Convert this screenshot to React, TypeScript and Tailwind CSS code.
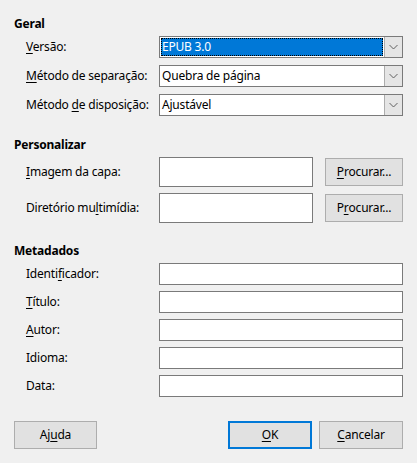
import React from "react";

const U = ({ children }: { children: React.ReactNode }) => (
  <span className="underline underline-offset-2 decoration-1">{children}</span>
);

function Chevron() {
  return (
    <svg width="9" height="6" viewBox="0 0 9 6" className="block">
      <path d="M0.5 1 L4.5 5 L8.5 1" fill="none" stroke="#606060" strokeWidth="1" />
    </svg>
  );
}

function Combo({ value, focused }: { value: string; focused?: boolean }) {
  return (
    <div className="flex h-[22px] w-[244px] shrink-0 border border-[#7a7a7a] bg-white">
      <div className="flex flex-1 items-center p-[1px]">
        {focused ? (
          <div className="flex h-full w-full items-center bg-[#0078d7] pl-[1px] text-white outline-1 outline-dotted outline-black -outline-offset-1">
            {value}
          </div>
        ) : (
          <div className="pl-[1px]">{value}</div>
        )}
      </div>
      <div className="flex w-[18px] items-center justify-center border-l border-[#adadad] bg-[#e5e5e5]">
        <Chevron />
      </div>
    </div>
  );
}

function Field({ w, h }: { w: string; h: string }) {
  return <div className={`${w} ${h} shrink-0 border border-[#7a7a7a] bg-white`} />;
}

function Btn({
  children,
  w,
  primary,
}: {
  children: React.ReactNode;
  w: string;
  primary?: boolean;
}) {
  return (
    <div
      className={`${w} flex h-[28px] shrink-0 items-center justify-center whitespace-nowrap bg-[#e1e1e1] ${
        primary ? "border-2 border-[#0078d7]" : "border border-[#adadad]"
      }`}
    >
      {children}
    </div>
  );
}

function Row({
  label,
  children,
  h,
}: {
  label: React.ReactNode;
  children: React.ReactNode;
  h: string;
}) {
  return (
    <div className={`flex ${h} items-center`}>
      <div className="w-[145px] shrink-0 whitespace-nowrap pl-[12px]">{label}</div>
      {children}
    </div>
  );
}

export default function App() {
  return (
    <div
      className="flex h-[463px] w-[417px] flex-col bg-[#f0f0f0] pl-[14px] pr-[14px] text-[12px] leading-[16px] text-black"
      style={{ fontFamily: '"Noto Sans", "Open Sans", sans-serif', letterSpacing: "-0.2px" }}
    >
      {/* Geral */}
      <div className="mt-[16px] h-[16px] font-bold">Geral</div>
      <div className="mt-[4px] flex flex-col gap-[7px]">
        <Row h="h-[22px]" label={<><U>V</U>ersão:</>}>
          <Combo value="EPUB 3.0" focused />
        </Row>
        <Row h="h-[22px]" label={<><U>M</U>étodo de separação:</>}>
          <Combo value="Quebra de página" />
        </Row>
        <Row h="h-[22px]" label={<>Método <U>d</U>e disposição:</>}>
          <Combo value="Ajustável" />
        </Row>
      </div>

      {/* Personalizar */}
      <div className="mt-[21px] h-[16px] font-bold">Personalizar</div>
      <div className="mt-[4px] flex flex-col gap-[6px]">
        <Row h="h-[30px]" label={<><U>I</U>magem da capa:</>}>
          <Field w="w-[154px]" h="h-[30px]" />
          <div className="ml-[12px]">
            <Btn w="w-[78px]">
              <U>P</U>rocurar...
            </Btn>
          </div>
        </Row>
        <Row h="h-[30px]" label={<>Diretório mu<U>l</U>timídia:</>}>
          <Field w="w-[154px]" h="h-[30px]" />
          <div className="ml-[12px]">
            <Btn w="w-[78px]">
              P<U>r</U>ocurar...
            </Btn>
          </div>
        </Row>
      </div>

      {/* Metadados */}
      <div className="mt-[20px] h-[16px] font-bold">Metadados</div>
      <div className="mt-[4px] flex flex-col gap-[6px]">
        <Row h="h-[22px]" label={<>Identi<U>f</U>icador:</>}>
          <Field w="w-[244px]" h="h-[22px]" />
        </Row>
        <Row h="h-[22px]" label={<><U>T</U>ítulo:</>}>
          <Field w="w-[244px]" h="h-[22px]" />
        </Row>
        <Row h="h-[22px]" label={<><U>A</U>utor:</>}>
          <Field w="w-[244px]" h="h-[22px]" />
        </Row>
        <Row h="h-[22px]" label={<>Idioma:</>}>
          <Field w="w-[244px]" h="h-[22px]" />
        </Row>
        <Row h="h-[22px]" label={<>Data:</>}>
          <Field w="w-[244px]" h="h-[22px]" />
        </Row>
      </div>

      {/* Dialog buttons */}
      <div className="mt-[24px] flex items-center">
        <Btn w="w-[83px]">
          Aj<U>u</U>da
        </Btn>
        <div className="flex-1" />
        <Btn w="w-[84px]" primary>
          <U>O</U>K
        </Btn>
        <div className="ml-[7px]">
          <Btn w="w-[84px]">
            <U>C</U>ancelar
          </Btn>
        </div>
      </div>
    </div>
  );
}
